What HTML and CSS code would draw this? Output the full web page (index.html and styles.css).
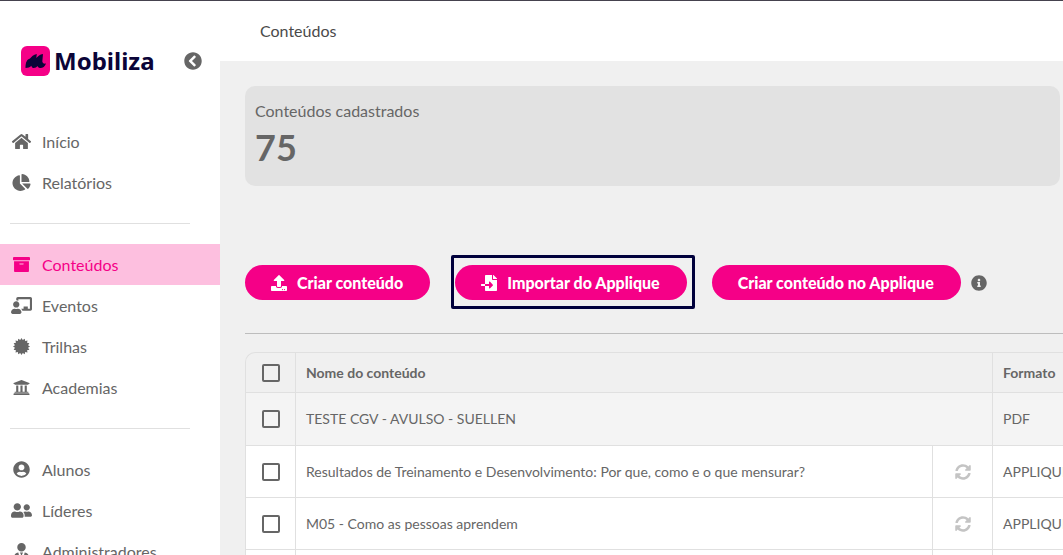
FILE: index.html
```
<!DOCTYPE html>
<html lang="pt-BR">

<head>
    <meta charset="UTF-8">
    <meta name="viewport" content="width=device-width, initial-scale=1.0">
    <title>Mobiliza - Conteúdos</title>
    <link rel="stylesheet" href="styles.css">
</head>

<body>
    <div class="app">
        <aside class="sidebar">
            <div class="brand">
                <a href="#" class="logo">
                    <svg class="logo-mark" viewBox="0 0 29 30">
                        <rect width="29" height="30" rx="6" fill="#f50087"/>
                        <path fill="#0b0438" d="M4.500 22C4.500 16 6 13.500 9 12.500C10.500 10.800 12.500 8.600 15.800 8L15.300 12C17 10.200 18.800 8.500 22 8L21.300 15.500C21.800 17.500 23.300 17.900 25 17.500C23.800 20.800 21.500 22.200 19 22C17.500 21.900 16.800 21 16.600 20C15.500 21.300 14.200 22.100 12.500 22C11.200 21.900 10.500 21 10.400 19.800C9 21.500 7 22 4.500 22Z"/>
                    </svg>
                    <span>Mobiliza</span>
                </a>
                <button class="collapse" aria-label="Recolher menu">
                    <svg class="icon" viewBox="0 0 512 512"><path d="M256 504C119 504 8 393 8 256S119 8 256 8s248 111 248 248-111 248-248 248zM142.100 273l135.500 135.500c9.400 9.400 24.600 9.400 33.900 0l17-17c9.400-9.400 9.400-24.600 0-33.900L226.900 256l101.600-101.600c9.400-9.400 9.400-24.600 0-33.900l-17-17c-9.400-9.400-24.600-9.400-33.900 0L142.100 239c-9.400 9.400-9.400 24.600 0 34z"/></svg>
                </button>
            </div>

            <nav class="menu">
                <a href="#" class="menu-item">
                    <svg class="icon" viewBox="0 0 576 512"><path d="M280.370 148.260L96 300.110V464a16 16 0 0 0 16 16l112.060-.29a16 16 0 0 0 15.920-16V368a16 16 0 0 1 16-16h64a16 16 0 0 1 16 16v95.640a16 16 0 0 0 16 16.050L464 480a16 16 0 0 0 16-16V300L295.670 148.260a12.190 12.190 0 0 0-15.300 0zM571.600 251.470L488 182.560V44.050a12 12 0 0 0-12-12h-56a12 12 0 0 0-12 12v72.610L318.470 43a48 48 0 0 0-61 0L4.340 251.470a12 12 0 0 0-1.600 16.900l25.500 31A12 12 0 0 0 45.150 301l235.220-193.740a12.190 12.190 0 0 1 15.300 0L530.900 301a12 12 0 0 0 16.900-1.600l25.500-31a12 12 0 0 0-1.700-16.930z"/></svg>
                    Início
                </a>
                <a href="#" class="menu-item">
                    <svg class="icon" viewBox="0 0 544 512"><path d="M527.790 288H290.500l158.030 158.030c6.040 6.040 15.980 6.530 22.190.68 38.700-36.460 65.320-85.610 73.130-140.860 1.340-9.460-6.510-17.850-16.060-17.850zm-15.830-64.800C503.720 103.740 408.260 8.280 288.800.04 279.680-.59 272 7.100 272 16.240V240h223.770c9.140 0 16.820-7.680 16.190-16.800zM224 288V50.710c0-9.550-8.390-17.400-17.840-16.060C86.990 51.490-4.100 155.600.14 280.370 4.500 408.510 114.830 513.590 243.030 511.980c50.400-.63 96.970-16.870 135.260-44.030 7.900-5.600 8.420-17.230 1.570-24.080L224 288z"/></svg>
                    Relatórios
                </a>
                <hr class="menu-divider">
                <a href="#" class="menu-item active">
                    <svg class="icon" viewBox="0 0 512 512"><path d="M32 448c0 17.700 14.300 32 32 32h384c17.700 0 32-14.300 32-32V160H32v288zm160-212c0-6.600 5.400-12 12-12h104c6.600 0 12 5.400 12 12v8c0 6.600-5.400 12-12 12H204c-6.600 0-12-5.400-12-12v-8zM480 32H32C14.300 32 0 46.300 0 64v48c0 8.800 7.200 16 16 16h480c8.800 0 16-7.200 16-16V64c0-17.700-14.300-32-32-32z"/></svg>
                    Conteúdos
                </a>
                <a href="#" class="menu-item">
                    <svg class="icon" viewBox="0 0 640 512"><path d="M208 352c-2.390 0-4.780.35-7.060 1.090C187.980 357.300 174.350 360 160 360c-14.350 0-27.980-2.700-40.950-6.910-2.280-.74-4.660-1.090-7.050-1.090C49.940 352-.33 402.480 0 464.620.14 490.880 21.730 512 48 512h224c26.270 0 47.860-21.120 48-47.380.33-62.140-49.940-112.620-112-112.620zm-48-32c53.020 0 96-42.980 96-96s-42.980-96-96-96-96 42.980-96 96 42.980 96 96 96zM592 0H208c-26.470 0-48 22.250-48 49.590V96c23.420 0 45.100 6.780 64 17.800V64h352v288h-64v-64H384v64h-76.240c19.100 16.690 33.120 38.730 39.690 64H592c26.470 0 48-22.250 48-49.590V49.590C640 22.250 618.470 0 592 0z"/></svg>
                    Eventos
                </a>
                <a href="#" class="menu-item">
                    <svg class="icon" viewBox="0 0 24 24"><path d="M24 12L21.200 13.800L23.100 16.600L19.800 17.200L20.500 20.500L17.200 19.800L16.600 23.100L13.800 21.200L12 24L10.200 21.200L7.400 23.100L6.800 19.800L3.500 20.500L4.200 17.200L0.900 16.600L2.800 13.800L0 12L2.800 10.200L0.900 7.400L4.200 6.800L3.500 3.500L6.800 4.200L7.400 0.900L10.200 2.800L12 0L13.800 2.800L16.600 0.900L17.200 4.200L20.500 3.500L19.800 6.800L23.100 7.400L21.200 10.200Z"/></svg>
                    Trilhas
                </a>
                <a href="#" class="menu-item">
                    <svg class="icon" viewBox="0 0 512 512"><path d="M496 128v16a8 8 0 0 1-8 8h-24v12c0 6.627-5.373 12-12 12H60c-6.627 0-12-5.373-12-12v-12H24a8 8 0 0 1-8-8v-16a8 8 0 0 1 4.941-7.392l232-88a7.996 7.996 0 0 1 6.118 0l232 88A8 8 0 0 1 496 128zm-24 304H40c-13.255 0-24 10.745-24 24v16a8 8 0 0 0 8 8h464a8 8 0 0 0 8-8v-16c0-13.255-10.745-24-24-24zM96 192v192H60c-6.627 0-12 5.373-12 12v20h416v-20c0-6.627-5.373-12-12-12h-36V192h-64v192h-64V192h-64v192h-64V192H96z"/></svg>
                    Academias
                </a>
                <hr class="menu-divider">
                <a href="#" class="menu-item">
                    <svg class="icon" viewBox="0 0 496 512"><path d="M248 8C111 8 0 119 0 256s111 248 248 248 248-111 248-248S385 8 248 8zm0 96c48.600 0 88 39.400 88 88s-39.400 88-88 88-88-39.400-88-88 39.400-88 88-88zm0 344c-58.700 0-111.300-26.600-146.500-68.200 18.800-35.400 55.600-59.800 98.500-59.800 2.400 0 4.800.4 7.100 1.100 13 4.200 26.600 6.900 40.900 6.900 14.300 0 28-2.700 40.900-6.900 2.300-.7 4.700-1.100 7.100-1.100 42.900 0 79.700 24.400 98.500 59.800C359.300 421.400 306.700 448 248 448z"/></svg>
                    Alunos
                </a>
                <a href="#" class="menu-item">
                    <svg class="icon" viewBox="0 0 640 512"><path d="M192 256c61.900 0 112-50.100 112-112S253.900 32 192 32 80 82.100 80 144s50.100 112 112 112zm76.800 32h-8.300c-20.800 10-43.900 16-68.500 16s-47.600-6-68.500-16h-8.300C51.600 288 0 339.600 0 403.200V432c0 26.500 21.500 48 48 48h288c26.500 0 48-21.500 48-48v-28.800c0-63.600-51.600-115.200-115.200-115.200zM480 256c53 0 96-43 96-96s-43-96-96-96-96 43-96 96 43 96 96 96zm48 32h-3.800c-13.900 4.800-28.600 8-44.200 8s-30.300-3.200-44.200-8H432c-20.400 0-39.200 5.900-55.700 15.400 24.400 26.300 39.700 61.200 39.700 99.800v38.400c0 2.200-.5 4.300-.6 6.400H592c26.500 0 48-21.500 48-48 0-61.900-50.100-112-112-112z"/></svg>
                    Líderes
                </a>
                <a href="#" class="menu-item">
                    <svg class="icon" viewBox="0 0 448 512"><path d="M224 256c70.700 0 128-57.300 128-128S294.700 0 224 0 96 57.300 96 128s57.300 128 128 128zm95.800 32.600L272 480l-32-136 32-56h-96l32 56-32 136-47.800-191.400C56.900 292 0 350.300 0 422.400V464c0 26.500 21.500 48 48 48h352c26.500 0 48-21.500 48-48v-41.600c0-72.100-56.900-130.400-128.200-133.800z"/></svg>
                    Administradores
                </a>
            </nav>
        </aside>

        <main class="main">
            <header class="topbar">Conteúdos</header>

            <div class="content">
                <section class="summary">
                    <div class="summary-label">Conteúdos cadastrados</div>
                    <div class="summary-value">75</div>
                </section>

                <div class="actions">
                    <button class="btn">
                        <svg class="icon" viewBox="0 0 512 512"><path d="M296 384h-80c-13.300 0-24-10.700-24-24V192h-87.700c-17.800 0-26.700-21.500-14.100-34.100L242.300 5.700c7.500-7.500 19.800-7.500 27.300 0l152.200 152.200c12.600 12.600 3.700 34.100-14.100 34.100H320v168c0 13.300-10.700 24-24 24zm216-8v112c0 13.300-10.700 24-24 24H24c-13.300 0-24-10.700-24-24V376c0-13.300 10.700-24 24-24h136v8c0 30.900 25.100 56 56 56h80c30.900 0 56-25.100 56-56v-8h136c13.300 0 24 10.700 24 24zm-124 88c0-11-9-20-20-20s-20 9-20 20 9 20 20 20 20-9 20-20zm64 0c0-11-9-20-20-20s-20 9-20 20 9 20 20 20 20-9 20-20z"/></svg>
                        Criar conteúdo
                    </button>
                    <div class="highlight">
                        <button class="btn">
                            <svg class="icon" viewBox="0 0 512 512"><path d="M16 288c-8.800 0-16 7.200-16 16v32c0 8.800 7.200 16 16 16h112v-64zm489-183L407.100 7c-4.500-4.500-10.600-7-17-7H384v128h128v-6.100c0-6.300-2.500-12.400-7-16.900zm-153 31V0H152c-13.300 0-24 10.700-24 24v264h128v-65.200c0-14.300 17.300-21.400 27.400-11.300L379 308c6.600 6.700 6.600 17.400 0 24l-95.700 96.400c-10.100 10.100-27.400 3-27.400-11.300V352H128v136c0 13.300 10.700 24 24 24h336c13.300 0 24-10.700 24-24V160H376c-13.200 0-24-10.800-24-24z"/></svg>
                            Importar do Applique
                        </button>
                    </div>
                    <button class="btn">Criar conteúdo no Applique</button>
                    <svg class="icon info" viewBox="0 0 512 512"><path d="M256 8C119.043 8 8 119.083 8 256c0 136.997 111.043 248 248 248s248-111.003 248-248C504 119.083 392.957 8 256 8zm0 110c23.196 0 42 18.804 42 42s-18.804 42-42 42-42-18.804-42-42 18.804-42 42-42zm56 254c0 6.627-5.373 12-12 12h-88c-6.627 0-12-5.373-12-12v-24c0-6.627 5.373-12 12-12h12v-64h-12c-6.627 0-12-5.373-12-12v-24c0-6.627 5.373-12 12-12h64c6.627 0 12 5.373 12 12v100h12c6.627 0 12 5.373 12 12v24z"/></svg>
                </div>

                <hr class="content-divider">

                <!-- icon reused by the sync buttons in the table -->
                <svg class="sprite">
                    <symbol id="sync" viewBox="0 0 512 512"><path d="M370.720 133.280C339.458 104.008 298.888 87.962 255.848 88c-77.458.068-144.328 53.178-162.791 126.850-1.344 5.363-6.122 9.150-11.651 9.150H24.103c-7.498 0-13.194-6.807-11.807-14.176C33.933 94.924 134.813 8 256 8c66.448 0 126.791 26.136 171.315 68.685L463.030 40.970C478.149 25.851 504 36.559 504 57.941V192c0 13.255-10.745 24-24 24H345.941c-21.382 0-32.090-25.851-16.971-40.971l41.750-41.749zM32 296h134.059c21.382 0 32.090 25.851 16.971 40.971l-41.750 41.750c31.262 29.273 71.835 45.319 114.876 45.280 77.418-.07 144.315-53.144 162.787-126.849 1.344-5.363 6.122-9.150 11.651-9.150h57.304c7.498 0 13.194 6.807 11.807 14.176C478.067 417.076 377.187 504 256 504c-66.448 0-126.791-26.136-171.315-68.685L48.970 471.030C33.851 486.149 8 475.441 8 454.059V320c0-13.255 10.745-24 24-24z"/></symbol>
                </svg>

                <table class="table">
                    <colgroup>
                        <col class="col-check">
                        <col>
                        <col class="col-sync">
                        <col class="col-format">
                    </colgroup>
                    <thead>
                        <tr>
                            <th class="check"><input type="checkbox" aria-label="Selecionar todos"></th>
                            <th colspan="2">Nome do conteúdo</th>
                            <th>Formato</th>
                        </tr>
                    </thead>
                    <tbody>
                        <tr class="hovered">
                            <td class="check"><input type="checkbox" aria-label="Selecionar TESTE CGV"></td>
                            <td colspan="2">TESTE CGV - AVULSO - SUELLEN</td>
                            <td>PDF</td>
                        </tr>
                        <tr>
                            <td class="check"><input type="checkbox" aria-label="Selecionar Resultados de Treinamento"></td>
                            <td>Resultados de Treinamento e Desenvolvimento: Por que, como e o que mensurar?</td>
                            <td class="sync"><button aria-label="Sincronizar"><svg class="icon"><use href="#sync"/></svg></button></td>
                            <td>APPLIQUE</td>
                        </tr>
                        <tr>
                            <td class="check"><input type="checkbox" aria-label="Selecionar M05"></td>
                            <td>M05 - Como as pessoas aprendem</td>
                            <td class="sync"><button aria-label="Sincronizar"><svg class="icon"><use href="#sync"/></svg></button></td>
                            <td>APPLIQUE</td>
                        </tr>
                        <tr>
                            <td class="check"></td>
                            <td></td>
                            <td class="sync"></td>
                            <td></td>
                        </tr>
                    </tbody>
                </table>
            </div>
        </main>
    </div>
</body>

</html>
```
FILE: styles.css
```
* {
    box-sizing: border-box;
}

body {
    margin: 0;
    font-family: Lato, "Liberation Sans", sans-serif;
    font-size: 16px;
    line-height: 20px;
    color: #666;
    background-color: #f0f0f0;
}

a {
    color: inherit;
    text-decoration: none;
}

button {
    padding: 0;
    border: none;
    background: none;
    color: inherit;
    font: inherit;
    cursor: pointer;
}

hr {
    margin: 0;
    border: none;
}

.icon {
    display: block;
    width: 16px;
    height: 16px;
    fill: currentColor;
}

.app {
    display: flex;
    height: 100vh;
    overflow: hidden;
    border-top: 1px solid #45424e;
}

/* Sidebar */
.sidebar {
    flex: 0 0 220px;
    background-color: white;
}

.brand {
    display: flex;
    align-items: center;
    justify-content: space-between;
    height: 120px;
    padding: 0 18px 0 21px;
}

.logo {
    display: flex;
    align-items: center;
    gap: 4px;
    font-family: "Noto Sans", sans-serif;
    font-size: 24px;
    font-weight: bold;
    color: #0b0438;
}

.logo-mark {
    width: 29px;
    height: 30px;
}

.collapse .icon {
    width: 18px;
    height: 18px;
}

.menu-item {
    display: flex;
    align-items: center;
    gap: 10px;
    height: 41px;
    padding-left: 11px;
}

.menu-item .icon {
    width: 21px;
    height: 17px;
}

.menu-item.active {
    background-color: #fdbfdf;
    color: #f50087;
}

.menu-divider {
    height: 1px;
    margin: 20px 30px 20px 10px;
    background-color: #e0e0e0;
}

/* Main area */
.main {
    flex: 1;
    min-width: 0;
    overflow: hidden;
}

.topbar {
    height: 60px;
    padding: 20px 40px;
    background-color: white;
    color: #4a4a4a;
}

.content {
    padding: 25px 0 0 25px;
}

.summary {
    height: 100px;
    margin-right: 3px;
    padding: 15px 10px;
    border-radius: 10px;
    background-color: #e2e2e2;
}

.summary-value {
    margin-top: 4px;
    font-size: 36px;
    line-height: 44px;
    font-weight: bold;
}

.actions {
    display: flex;
    align-items: center;
    gap: 25px;
    margin-top: 79px;
}

.btn {
    display: flex;
    align-items: center;
    gap: 10px;
    height: 35px;
    padding: 0 27px 0 26px;
    border-radius: 18px;
    background-color: #f50087;
    color: white;
    font-weight: 900;
    white-space: nowrap;
}

.highlight {
    position: relative;
}

.highlight::after {
    content: "";
    position: absolute;
    inset: -10px -8px -9px -4px;
    border: 3px solid #00003c;
    border-radius: 2px;
    pointer-events: none;
}

.info {
    margin-left: -15px;
}

.content-divider {
    height: 1px;
    margin: 33px 0 18px;
    background-color: #bdbdbd;
}

.sprite {
    display: none;
}

/* Table runs past the right edge of the page */
.table {
    width: calc(100% + 50px);
    table-layout: fixed;
    border-collapse: separate;
    border-spacing: 0;
    border-top: 1px solid #e0e0e0;
    border-left: 1px solid #e0e0e0;
    border-radius: 10px 0 0 0;
    font-size: 14px;
}

.col-check {
    width: 50px;
}

.col-sync {
    width: 60px;
}

.col-format {
    width: 120px;
}

.table th,
.table td {
    height: 52px;
    padding: 0 10px;
    border-right: 1px solid #e0e0e0;
    border-bottom: 1px solid #e0e0e0;
    text-align: left;
    white-space: nowrap;
}

.table th {
    height: 40px;
}

.table td {
    background-color: white;
}

.table .hovered td {
    height: 53px;
    background-color: #f4f4f4;
}

.table .check {
    padding: 0 0 0 16px;
}

.check input {
    display: block;
    appearance: none;
    width: 18px;
    height: 18px;
    margin: 0;
    border: 2px solid #666;
    border-radius: 2px;
}

.sync button {
    display: block;
    margin: 0 auto;
    color: #c4c4c4;
}
```
